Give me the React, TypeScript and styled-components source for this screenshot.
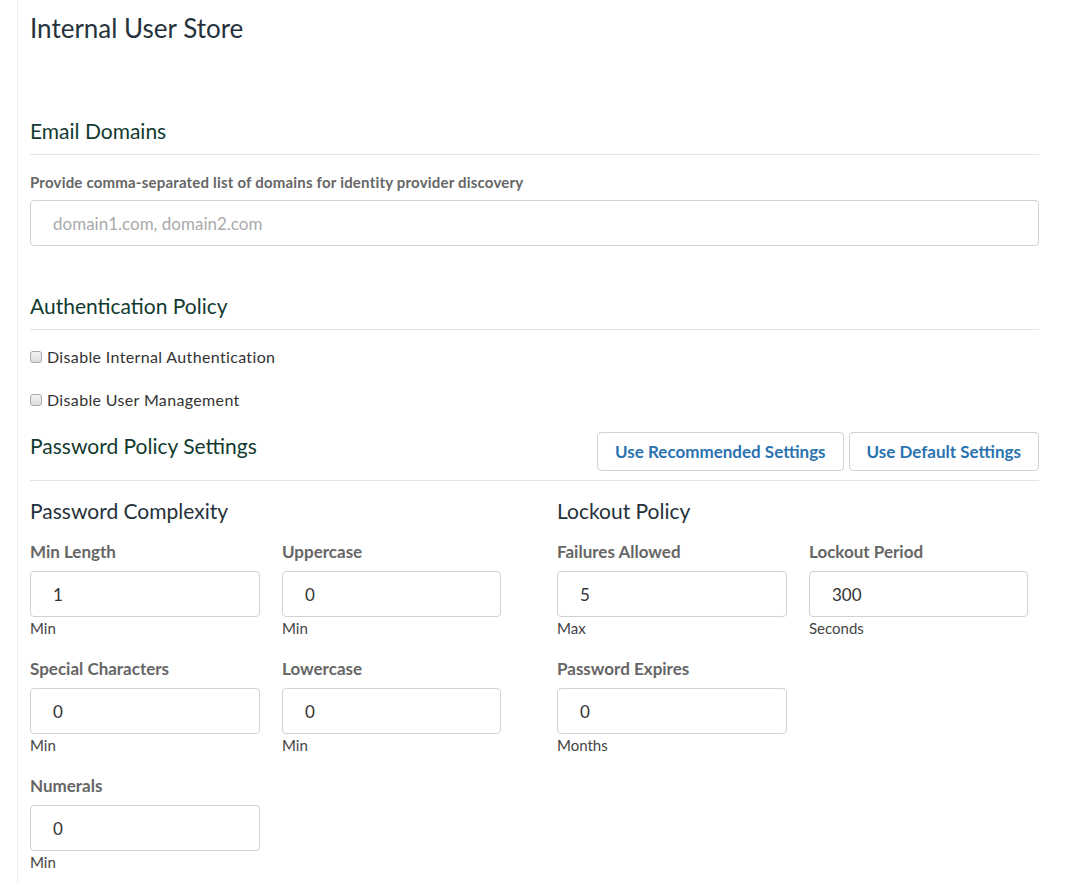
import React from 'react';
import styled, { createGlobalStyle } from 'styled-components';

const GlobalStyle = createGlobalStyle`
  html, body {
    margin: 0;
    padding: 0;
    background: #fff;
    font-family: "Source Sans Pro", Lato, "Liberation Sans", sans-serif;
    color: #333;
  }
`;

interface Field {
  label: string;
  value: string;
  hint: string;
}

const complexityFields: Field[] = [
  { label: 'Min Length', value: '1', hint: 'Min' },
  { label: 'Uppercase', value: '0', hint: 'Min' },
  { label: 'Special Characters', value: '0', hint: 'Min' },
  { label: 'Lowercase', value: '0', hint: 'Min' },
  { label: 'Numerals', value: '0', hint: 'Min' },
];

const lockoutFields: Field[] = [
  { label: 'Failures Allowed', value: '5', hint: 'Max' },
  { label: 'Lockout Period', value: '300', hint: 'Seconds' },
  { label: 'Password Expires', value: '0', hint: 'Months' },
];

const FieldList: React.FC<{ fields: Field[] }> = ({ fields }) => (
  <FieldGrid>
    {fields.map((f) => (
      <FieldGroup key={f.label}>
        <FieldLabel>{f.label}</FieldLabel>
        <SmallInput defaultValue={f.value} />
        <Hint>{f.hint}</Hint>
      </FieldGroup>
    ))}
  </FieldGrid>
);

const App: React.FC = () => {
  return (
    <>
      <GlobalStyle />
      <Panel>
        <Title>Internal User Store</Title>

        <SectionHeader $first>
          <SectionTitle>Email Domains</SectionTitle>
        </SectionHeader>
        <BoldLabel>Provide comma-separated list of domains for identity provider discovery</BoldLabel>
        <TextInput placeholder="domain1.com, domain2.com" />

        <SectionHeader>
          <SectionTitle>Authentication Policy</SectionTitle>
        </SectionHeader>
        <CheckRow>
          <Check type="checkbox" />
          Disable Internal Authentication
        </CheckRow>
        <CheckRow>
          <Check type="checkbox" />
          Disable User Management
        </CheckRow>

        <PolicyHeader>
          <SectionTitle>Password Policy Settings</SectionTitle>
          <ButtonGroup>
            <Button>Use Recommended Settings</Button>
            <Button>Use Default Settings</Button>
          </ButtonGroup>
        </PolicyHeader>

        <Columns>
          <Column>
            <SubTitle>Password Complexity</SubTitle>
            <FieldList fields={complexityFields} />
          </Column>
          <Column>
            <SubTitle>Lockout Policy</SubTitle>
            <FieldList fields={lockoutFields} />
          </Column>
        </Columns>
      </Panel>
    </>
  );
};

export default App;

const Panel = styled.div`
  margin-left: 17px;
  border-left: 1px solid #f0f0f0;
  padding: 12px 27px 20px 12px;
  min-height: 884px;
  box-sizing: border-box;
`;

const Title = styled.h1`
  margin: 0;
  font-size: 26px;
  line-height: 32px;
  font-weight: 400;
  color: #25323b;
`;

const SectionHeader = styled.div<{ $first?: boolean }>`
  margin-top: ${(p) => (p.$first ? '75px' : '48px')};
  padding-bottom: 11px;
  border-bottom: 1px solid #e3e3e3;
`;

const SectionTitle = styled.h2`
  margin: 0;
  font-size: 21px;
  line-height: 24px;
  font-weight: 400;
  color: #123a30;
`;

const BoldLabel = styled.div`
  margin-top: 17px;
  font-size: 15px;
  line-height: 20px;
  letter-spacing: 0.2px;
  font-weight: 700;
  color: #666;
`;

const TextInput = styled.input`
  display: block;
  box-sizing: border-box;
  width: 100%;
  height: 46px;
  margin-top: 8px;
  padding: 0 22px;
  border: 1px solid #cfd3d6;
  border-radius: 4px;
  font-family: inherit;
  font-size: 17px;
  color: #333;
  outline: none;

  &::placeholder {
    color: #aaa;
  }
`;

const CheckRow = styled.label`
  display: flex;
  align-items: center;
  height: 24px;
  margin-top: 14px;
  font-size: 16px;
  letter-spacing: 0.35px;
  color: #333;

  & + & {
    margin-top: 19px;
  }
`;

const Check = styled.input`
  appearance: none;
  width: 12px;
  height: 12px;
  margin: 1px 5px 0 0;
  border: 1px solid #a9a9a9;
  border-radius: 3px;
  background: linear-gradient(#f4f4f4, #dcdcdc);
  box-sizing: border-box;
`;

const PolicyHeader = styled.div`
  display: flex;
  justify-content: space-between;
  align-items: flex-start;
  margin-top: 21px;
  padding-bottom: 9px;
  border-bottom: 1px solid #e3e3e3;

  h2 {
    margin-top: 2px;
  }
`;

const ButtonGroup = styled.div`
  display: flex;
  gap: 5px;
`;

const Button = styled.button`
  height: 39px;
  padding: 0 17px;
  background: #fff;
  border: 1px solid #cfd3d6;
  border-radius: 4px;
  font-family: inherit;
  font-size: 17px;
  font-weight: 700;
  color: #2a73b0;
  cursor: pointer;
`;

const Columns = styled.div`
  display: grid;
  grid-template-columns: 527px 1fr;
`;

const Column = styled.div`
  padding-top: 18px;
`;

const SubTitle = styled.h3`
  margin: 0;
  font-size: 21px;
  line-height: 24px;
  font-weight: 400;
  color: #25323b;
`;

const FieldGrid = styled.div`
  display: grid;
  grid-template-columns: 230px 219px;
  column-gap: 22px;
  row-gap: 21px;
  margin-top: 18px;
`;

const FieldGroup = styled.div`
  display: flex;
  flex-direction: column;
`;

const FieldLabel = styled.div`
  font-size: 17px;
  line-height: 22px;
  font-weight: 700;
  color: #666;
`;

const SmallInput = styled.input`
  box-sizing: border-box;
  width: 100%;
  height: 46px;
  margin-top: 8px;
  padding: 0 22px;
  border: 1px solid #cfd3d6;
  border-radius: 4px;
  font-family: inherit;
  font-size: 17px;
  color: #333;
  outline: none;
`;

const Hint = styled.div`
  margin-top: 2px;
  font-size: 15px;
  line-height: 18px;
  color: #444;
`;
